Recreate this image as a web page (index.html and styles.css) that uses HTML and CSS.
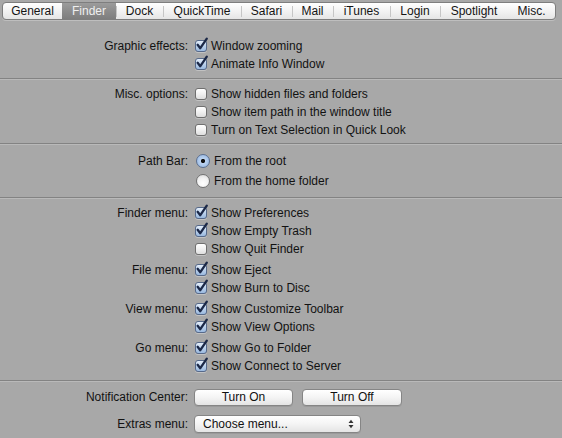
FILE: index.html
```html
<!DOCTYPE html>
<html>
<head>
<meta charset="utf-8">
<link rel="stylesheet" href="styles.css">
</head>
<body>
<nav class="tabs">
  <span class="tab w-general">General</span>
  <span class="tab sel w-finder">Finder</span>
  <span class="tab div w-dock">Dock</span>
  <span class="tab div w-qt">QuickTime</span>
  <span class="tab div w-safari">Safari</span>
  <span class="tab div w-mail">Mail</span>
  <span class="tab div w-itunes">iTunes</span>
  <span class="tab div w-login">Login</span>
  <span class="tab div w-spot">Spotlight</span>
  <span class="tab w-misc">Misc.</span>
</nav>

<section class="group g1">
  <div class="row">
    <div class="label">Graphic effects:</div>
    <div class="opts">
      <div class="opt"><span class="cb on"><svg class="tick" viewBox="0 0 14 14"><path d="M2.6 6.8 L5.3 10.2 L11.8 0.6"/></svg></span>Window zooming</div>
      <div class="opt"><span class="cb on"><svg class="tick" viewBox="0 0 14 14"><path d="M2.6 6.8 L5.3 10.2 L11.8 0.6"/></svg></span>Animate Info Window</div>
    </div>
  </div>
</section>
<div class="sep"></div>

<section class="group g2">
  <div class="row">
    <div class="label">Misc. options:</div>
    <div class="opts">
      <div class="opt"><span class="cb"></span>Show hidden files and folders</div>
      <div class="opt"><span class="cb"></span>Show item path in the window title</div>
      <div class="opt"><span class="cb"></span>Turn on Text Selection in Quick Look</div>
    </div>
  </div>
</section>
<div class="sep"></div>

<section class="group g3">
  <div class="row radios">
    <div class="label">Path Bar:</div>
    <div class="opts">
      <div class="opt r"><span class="rb on"></span>From the root</div>
      <div class="opt r"><span class="rb"></span>From the home folder</div>
    </div>
  </div>
</section>
<div class="sep"></div>

<section class="group g4">
  <div class="row">
    <div class="label">Finder menu:</div>
    <div class="opts">
      <div class="opt"><span class="cb on"><svg class="tick" viewBox="0 0 14 14"><path d="M2.6 6.8 L5.3 10.2 L11.8 0.6"/></svg></span>Show Preferences</div>
      <div class="opt"><span class="cb on"><svg class="tick" viewBox="0 0 14 14"><path d="M2.6 6.8 L5.3 10.2 L11.8 0.6"/></svg></span>Show Empty Trash</div>
      <div class="opt"><span class="cb"></span>Show Quit Finder</div>
    </div>
  </div>
  <div class="row">
    <div class="label">File menu:</div>
    <div class="opts">
      <div class="opt"><span class="cb on"><svg class="tick" viewBox="0 0 14 14"><path d="M2.6 6.8 L5.3 10.2 L11.8 0.6"/></svg></span>Show Eject</div>
      <div class="opt"><span class="cb on"><svg class="tick" viewBox="0 0 14 14"><path d="M2.6 6.8 L5.3 10.2 L11.8 0.6"/></svg></span>Show Burn to Disc</div>
    </div>
  </div>
  <div class="row">
    <div class="label">View menu:</div>
    <div class="opts">
      <div class="opt"><span class="cb on"><svg class="tick" viewBox="0 0 14 14"><path d="M2.6 6.8 L5.3 10.2 L11.8 0.6"/></svg></span>Show Customize Toolbar</div>
      <div class="opt"><span class="cb on"><svg class="tick" viewBox="0 0 14 14"><path d="M2.6 6.8 L5.3 10.2 L11.8 0.6"/></svg></span>Show View Options</div>
    </div>
  </div>
  <div class="row">
    <div class="label">Go menu:</div>
    <div class="opts">
      <div class="opt"><span class="cb on"><svg class="tick" viewBox="0 0 14 14"><path d="M2.6 6.8 L5.3 10.2 L11.8 0.6"/></svg></span>Show Go to Folder</div>
      <div class="opt"><span class="cb on"><svg class="tick" viewBox="0 0 14 14"><path d="M2.6 6.8 L5.3 10.2 L11.8 0.6"/></svg></span>Show Connect to Server</div>
    </div>
  </div>
</section>
<div class="sep"></div>

<section class="group g5">
  <div class="row ctl">
    <div class="label">Notification Center:</div>
    <div class="controls">
      <button class="btn w-on">Turn On</button>
      <button class="btn w-off">Turn Off</button>
    </div>
  </div>
  <div class="row ctl">
    <div class="label">Extras menu:</div>
    <div class="controls">
      <div class="popup"><span>Choose menu...</span><svg class="updown" viewBox="0 0 6 10"><path d="M0.5 4 L3 0.8 L5.5 4 Z M0.5 6 L3 9.2 L5.5 6 Z"/></svg></div>
    </div>
  </div>
</section>
</body>
</html>
```

FILE: styles.css
```css
html, body {
  margin: 0;
  padding: 0;
}
body {
  width: 562px;
  height: 438px;
  overflow: hidden;
  background: #a8a8a8;
  font-family: "Liberation Sans", Arial, sans-serif;
  font-size: 12px;
  color: #121212;
}

/* tab bar */
.tabs {
  display: flex;
  box-sizing: border-box;
  width: 554px;
  height: 18px;
  margin: 2px 0 0 2px;
  border: 1px solid #7e7e7e;
  border-radius: 4px;
  overflow: hidden;
  background: linear-gradient(#ffffff, #f3f3f3 50%, #e5e5e5);
  box-shadow: 0 1px 0 rgba(255,255,255,0.25);
}
.tab {
  display: flex;
  align-items: center;
  justify-content: center;
  height: 100%;
  flex: none;
  font-size: 12px;
  color: #141414;
}
.tab.div {
  background: linear-gradient(#c6c6c6, #c6c6c6) left center / 1px 11px no-repeat;
}
.tab.sel {
  background: linear-gradient(#9c9c9c, #8a8a8a 55%, #7e7e7e);
  color: #efefef;
}
.w-general { width: 59px; }
.w-finder { width: 54px; }
.w-dock { width: 47px; }
.w-qt { width: 78px; }
.w-safari { width: 51px; }
.w-mail { width: 41px; }
.w-itunes { width: 57px; }
.w-login { width: 50px; }
.w-spot { width: 68px; }
.w-misc { width: 47px; }

/* groups */
.group {
  display: flex;
  flex-direction: column;
}
.g1 { padding: 17px 0 5px; }
.g2 { padding: 5px 0 4px; }
.g3 { padding: 6px 0 6px; }
.g4 { padding: 5px 0 5px; gap: 3px; }
.g5 { padding: 6px 0 0; gap: 9px; }

.sep {
  height: 0;
  border-top: 1px solid #838383;
  border-bottom: 1px solid #b9b9b9;
}

.row {
  display: grid;
  grid-template-columns: 188px auto;
  align-items: start;
}
.label {
  text-align: right;
  line-height: 18px;
  white-space: nowrap;
}
.opts {
  display: flex;
  flex-direction: column;
}
.opt {
  display: flex;
  align-items: center;
  height: 18px;
  white-space: nowrap;
}
.opt.r { height: 20px; }
.radios .label { line-height: 20px; }

/* checkbox */
.cb {
  position: relative;
  flex: none;
  box-sizing: border-box;
  width: 12px;
  height: 12px;
  margin: 0 4px 0 7px;
  border: 1px solid #6f6f6f;
  border-radius: 3px;
  background: linear-gradient(#ffffff, #f1f1f1 50%, #dedede);
  box-shadow: 0 1px 0 rgba(255,255,255,0.3);
}
.cb.on {
  border-color: #56698a;
  background: linear-gradient(#e4eefa, #bcd2ec 50%, #9ab9df);
}
.tick {
  position: absolute;
  left: -1px;
  top: -3px;
  width: 14px;
  height: 14px;
  overflow: visible;
}
.tick path {
  fill: none;
  stroke: #1b2847;
  stroke-width: 2.3;
  stroke-linecap: round;
  stroke-linejoin: round;
}

/* radio */
.rb {
  position: relative;
  flex: none;
  box-sizing: border-box;
  width: 14px;
  height: 14px;
  margin: 0 4px 0 8px;
  border: 1px solid #737373;
  border-radius: 50%;
  background: radial-gradient(circle at 50% 70%, #ffffff, #f2f2f2 50%, #d6d6d6);
}
.rb.on {
  border-color: #5b6f90;
  background: radial-gradient(circle at 50% 50%, #111 0, #111 1.8px, #bcd3f0 2.4px, #8fb2e0 100%);
}

/* controls */
.row.ctl {
  align-items: center;
  height: 18px;
}
.controls {
  display: flex;
  gap: 9px;
  margin-left: 6px;
}
.btn {
  box-sizing: border-box;
  height: 17px;
  padding: 0;
  border: 1px solid #858585;
  border-radius: 4px;
  background: linear-gradient(#ffffff, #f4f4f4 50%, #e4e4e4);
  font-family: "Liberation Sans", Arial, sans-serif;
  font-size: 12px;
  color: #111;
  line-height: 15px;
  box-shadow: 0 1px 0 rgba(0,0,0,0.08);
}
.w-on { width: 99px; }
.w-off { width: 100px; }
.popup {
  display: flex;
  align-items: center;
  justify-content: space-between;
  box-sizing: border-box;
  width: 167px;
  height: 18px;
  padding: 0 6px 0 8px;
  border: 1px solid #858585;
  border-radius: 4px;
  background: linear-gradient(#ffffff, #f4f4f4 50%, #e4e4e4);
  box-shadow: 0 1px 0 rgba(0,0,0,0.08);
}
.updown {
  width: 6px;
  height: 10px;
}
.updown path {
  fill: #333;
}
```
